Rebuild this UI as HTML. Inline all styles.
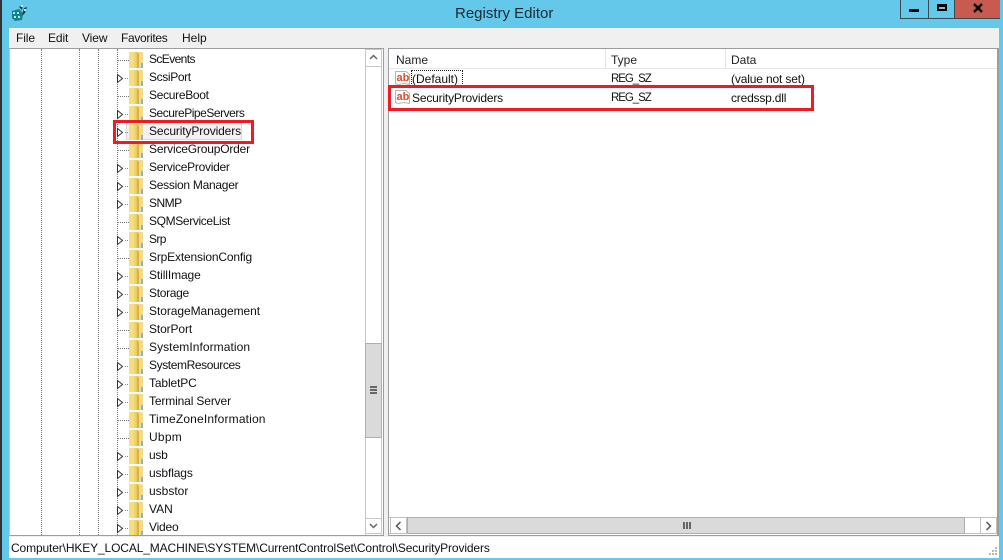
<!DOCTYPE html>
<html>
<head>
<meta charset="utf-8">
<style>
html,body{margin:0;padding:0;width:1003px;height:560px;overflow:hidden;background:#63c8ea}
body{position:relative;font-family:"Liberation Sans",sans-serif;font-size:12px;color:#111}
div,span,svg{position:absolute}
.t{white-space:nowrap;line-height:18px;height:18px}
.m{top:29px;line-height:18px;color:#111}
.r{left:0;width:360px;height:18px}
.r .t{left:139px;top:0}
.r svg{left:0;top:0;overflow:visible}
.h{top:51px;line-height:18px;color:#222;white-space:nowrap}
.sep{top:49px;width:1px;height:19px;background:#e3e3e3}
.red{border:3px solid #ed1c24;box-sizing:border-box}
.sz{font-size:11.500px;letter-spacing:-1.050px}
</style>
</head>
<body>
<svg width="0" height="0" style="left:0;top:0">
<defs>
<linearGradient id="f" x1="0" x2="1" y1="0" y2="0"><stop offset="0" stop-color="#f4dc8a"/><stop offset=".5" stop-color="#f6de80"/><stop offset="1" stop-color="#e9c75f"/></linearGradient>
<g id="folder">
<path d="M119 2H133V18H119Z" fill="#f3dc88"/>
<path d="M119 2H127V18H119Z" fill="url(#f)"/>
<path d="M127 2L129 4V18H127Z" fill="#d9b24a"/>
<path d="M131 13H133V18H131Z" fill="#7fb6d6"/>
</g>
<g id="arrow"><path d="M107.500 6.500L112.500 10.500L107.500 14.500Z" fill="#fff" stroke="#333" stroke-width="1"/><path d="M115 10.500H118" stroke="#888" stroke-dasharray="1 1"/></g>
<path id="dash" d="M108 10.500H119" stroke="#777" stroke-dasharray="1 1"/>
</defs>
</svg>

<!-- window -->
<div style="left:0;top:0;width:2px;height:560px;background:#333"></div>
<svg style="left:10px;top:4px" width="18" height="18" viewBox="0 0 18 18">
<path d="M2 7L9 5L13 9L12 16L5 17L2 14Z" fill="#17828c"/>
<path d="M3 8h2v2H3zM7 8h2v2H7zM4 12h2v2H4zM8 12h2v2H8z" fill="#9cf0ee"/>
<path d="M9 3L13 1L12 6ZM14 4L17 3L15 9L12 12Z" fill="#0f3a44"/>
<path d="M11 1h2v2h-2zM14 5h2v2h-2z" fill="#a8f4f0"/>
</svg>
<div class="t" style="left:455px;top:5px;font-size:15px;color:#1d2a33;line-height:18px">Registry Editor</div>

<!-- caption buttons -->
<div style="left:900px;top:0;width:54px;height:18px;border:1px solid #3b4a50;border-top:0;border-right:0"></div>
<div style="left:928px;top:0;width:1px;height:18px;background:#3b4a50"></div>
<div style="left:954px;top:0;width:46px;height:19px;background:#c75b50;border-bottom:1px solid #3b4a50;border-left:1px solid #3b4a50;box-sizing:border-box"></div>
<div style="left:909px;top:9px;width:10px;height:3px;background:#000"></div>
<div style="left:937px;top:4px;width:6px;height:2px;border:2px solid #000;border-top-width:3px"></div>
<svg style="left:972px;top:3px" width="12" height="10" viewBox="0 0 12 10"><path d="M2 1L10 9M10 1L2 9" stroke="#000" stroke-width="2.400"/></svg>

<!-- client -->
<div style="left:9px;top:28px;width:990px;height:530px;background:#f0f0f0"></div>
<div class="m" style="left:16px;letter-spacing:-.1px">File</div>
<div class="m" style="left:48px;letter-spacing:-.1px">Edit</div>
<div class="m" style="left:82px;letter-spacing:-.1px">View</div>
<div class="m" style="left:121px;letter-spacing:-.33px">Favorites</div>
<div class="m" style="left:182px">Help</div>

<!-- tree pane -->
<div style="left:9px;top:48px;width:375px;height:488px;background:#fff;border-top:1px solid #9a9ea3;border-left:1px solid #c4c8cc;border-right:1px solid #9a9ea3;border-bottom:1px solid #9a9ea3;box-sizing:border-box"></div>
<div style="left:41px;top:49px;width:0;height:486px;border-left:1px dotted #777"></div>
<div style="left:79px;top:49px;width:0;height:486px;border-left:1px dotted #777"></div>
<div style="left:98px;top:49px;width:0;height:486px;border-left:1px dotted #777"></div>
<div style="left:117px;top:49px;width:0;height:486px;border-left:1px dotted #777"></div>

<div style="left:10px;top:49px;width:355px;height:486px;overflow:hidden">
<div style="left:116px;top:73px;width:116px;height:18px;background:#f2f2f2;border:1px solid #dadada;box-sizing:border-box"></div>
<div class="r" style="top:1px"><svg width="10" height="18"><use href="#dash"/><use href="#folder"/></svg><div class="t" style="letter-spacing:-.6px">ScEvents</div></div>
<div class="r" style="top:19px"><svg width="10" height="18"><use href="#arrow"/><use href="#folder"/></svg><div class="t" style="letter-spacing:-.37px">ScsiPort</div></div>
<div class="r" style="top:37px"><svg width="10" height="18"><use href="#dash"/><use href="#folder"/></svg><div class="t" style="letter-spacing:-.3px">SecureBoot</div></div>
<div class="r" style="top:55px"><svg width="10" height="18"><use href="#arrow"/><use href="#folder"/></svg><div class="t" style="letter-spacing:-.47px">SecurePipeServers</div></div>
<div class="r" style="top:73px"><svg width="10" height="18"><use href="#arrow"/><use href="#folder"/></svg><div class="t" style="letter-spacing:-.12px">SecurityProviders</div></div>
<div class="r" style="top:91px"><svg width="10" height="18"><use href="#dash"/><use href="#folder"/></svg><div class="t" style="letter-spacing:-.18px">ServiceGroupOrder</div></div>
<div class="r" style="top:109px"><svg width="10" height="18"><use href="#arrow"/><use href="#folder"/></svg><div class="t" style="letter-spacing:-.27px">ServiceProvider</div></div>
<div class="r" style="top:127px"><svg width="10" height="18"><use href="#arrow"/><use href="#folder"/></svg><div class="t" style="letter-spacing:-.27px">Session Manager</div></div>
<div class="r" style="top:145px"><svg width="10" height="18"><use href="#arrow"/><use href="#folder"/></svg><div class="t" style="letter-spacing:-.5px">SNMP</div></div>
<div class="r" style="top:163px"><svg width="10" height="18"><use href="#dash"/><use href="#folder"/></svg><div class="t" style="letter-spacing:-.36px">SQMServiceList</div></div>
<div class="r" style="top:181px"><svg width="10" height="18"><use href="#arrow"/><use href="#folder"/></svg><div class="t" style="letter-spacing:-.6px">Srp</div></div>
<div class="r" style="top:199px"><svg width="10" height="18"><use href="#dash"/><use href="#folder"/></svg><div class="t" style="letter-spacing:-.17px">SrpExtensionConfig</div></div>
<div class="r" style="top:217px"><svg width="10" height="18"><use href="#arrow"/><use href="#folder"/></svg><div class="t" style="letter-spacing:-.1px">StillImage</div></div>
<div class="r" style="top:235px"><svg width="10" height="18"><use href="#arrow"/><use href="#folder"/></svg><div class="t" style="letter-spacing:-.3px">Storage</div></div>
<div class="r" style="top:253px"><svg width="10" height="18"><use href="#arrow"/><use href="#folder"/></svg><div class="t" style="letter-spacing:-.06px">StorageManagement</div></div>
<div class="r" style="top:271px"><svg width="10" height="18"><use href="#dash"/><use href="#folder"/></svg><div class="t" style="letter-spacing:-.12px">StorPort</div></div>
<div class="r" style="top:289px"><svg width="10" height="18"><use href="#dash"/><use href="#folder"/></svg><div class="t" style="letter-spacing:.06px">SystemInformation</div></div>
<div class="r" style="top:307px"><svg width="10" height="18"><use href="#arrow"/><use href="#folder"/></svg><div class="t" style="letter-spacing:-.4px">SystemResources</div></div>
<div class="r" style="top:325px"><svg width="10" height="18"><use href="#arrow"/><use href="#folder"/></svg><div class="t" style="letter-spacing:-.12px">TabletPC</div></div>
<div class="r" style="top:343px"><svg width="10" height="18"><use href="#arrow"/><use href="#folder"/></svg><div class="t" style="letter-spacing:-.14px">Terminal Server</div></div>
<div class="r" style="top:361px"><svg width="10" height="18"><use href="#dash"/><use href="#folder"/></svg><div class="t" style="letter-spacing:.16px">TimeZoneInformation</div></div>
<div class="r" style="top:379px"><svg width="10" height="18"><use href="#dash"/><use href="#folder"/></svg><div class="t" style="letter-spacing:.25px">Ubpm</div></div>
<div class="r" style="top:397px"><svg width="10" height="18"><use href="#arrow"/><use href="#folder"/></svg><div class="t" style="letter-spacing:-.3px">usb</div></div>
<div class="r" style="top:415px"><svg width="10" height="18"><use href="#arrow"/><use href="#folder"/></svg><div class="t" style="letter-spacing:-.12px">usbflags</div></div>
<div class="r" style="top:433px"><svg width="10" height="18"><use href="#arrow"/><use href="#folder"/></svg><div class="t">usbstor</div></div>
<div class="r" style="top:451px"><svg width="10" height="18"><use href="#arrow"/><use href="#folder"/></svg><div class="t">VAN</div></div>
<div class="r" style="top:469px"><svg width="10" height="18"><use href="#arrow"/><use href="#folder"/></svg><div class="t" style="letter-spacing:-.2px">Video</div></div>
</div>

<!-- tree scrollbar -->
<div style="left:365px;top:49px;width:17px;height:486px;background:#fff;border-left:1px solid #c8c8c8;border-right:1px solid #c8c8c8;box-sizing:border-box"></div>
<div style="left:365px;top:49px;width:17px;height:18px;border:1px solid #c8c8c8;box-sizing:border-box;background:#fff"></div>
<svg style="left:369px;top:54px" width="9" height="6"><path d="M1 5L4.500 1.500L8 5" fill="none" stroke="#666" stroke-width="1.500"/></svg>
<div style="left:365px;top:343px;width:17px;height:95px;background:#dadada;border:1px solid #aeaeae;box-sizing:border-box"></div>
<div style="left:370px;top:386px;width:7px;height:2px;background:#666"></div>
<div style="left:370px;top:389px;width:7px;height:2px;background:#666"></div>
<div style="left:370px;top:392px;width:7px;height:2px;background:#666"></div>
<div style="left:365px;top:518px;width:17px;height:16px;border:1px solid #c8c8c8;box-sizing:border-box;background:#fff"></div>
<svg style="left:369px;top:523px" width="9" height="6"><path d="M1 1L4.500 4.500L8 1" fill="none" stroke="#666" stroke-width="1.500"/></svg>

<!-- list pane -->
<div style="left:388px;top:48px;width:611px;height:488px;background:#fff;border:1px solid #9a9ea3;border-right:2px solid #9a9ea3;box-sizing:border-box"></div>
<div class="h" style="left:396px">Name</div>
<div class="h" style="left:611px">Type</div>
<div class="h" style="left:731px">Data</div>
<div class="sep" style="left:605px"></div>
<div class="sep" style="left:725px"></div>
<div style="left:389px;top:68px;width:608px;height:1px;background:#e8e8e8"></div>

<svg style="left:394px;top:70px" width="18" height="17" viewBox="0 0 18 17"><path d="M1.500 1.500H12L15.500 4.500V14.500L10 13.500L4 14.500L1.500 13.500Z" fill="#fff" stroke="#b5b5b5"/><text x="2.500" y="11" font-family="Liberation Sans" font-size="11" font-weight="bold" fill="#d4502a">ab</text></svg>
<div class="t" style="left:412px;top:70px">(Default)</div>
<div style="left:411px;top:70px;width:52px;height:16px;border:1px dotted #222;box-sizing:border-box"></div>
<div class="t sz" style="left:611px;top:70px">REG_SZ</div>
<div class="t" style="left:731px;top:70px;letter-spacing:-.15px">(value not set)</div>

<svg style="left:394px;top:89px" width="18" height="17" viewBox="0 0 18 17"><path d="M1.500 1.500H12L15.500 4.500V14.500L10 13.500L4 14.500L1.500 13.500Z" fill="#fff" stroke="#b5b5b5"/><text x="2.500" y="11" font-family="Liberation Sans" font-size="11" font-weight="bold" fill="#d4502a">ab</text></svg>
<div class="t" style="left:412px;top:89px;letter-spacing:-.18px">SecurityProviders</div>
<div class="t sz" style="left:611px;top:89px">REG_SZ</div>
<div class="t" style="left:731px;top:89px;letter-spacing:-.2px">credssp.dll</div>

<!-- red highlight boxes -->
<div class="red" style="left:113px;top:120px;width:141px;height:24px"></div>
<div class="red" style="left:388px;top:85px;width:426px;height:26px"></div>

<!-- list hscroll -->
<div style="left:389px;top:517px;width:608px;height:17px;background:#fff;border-top:1px solid #c0c0c0;border-bottom:1px solid #c0c0c0;box-sizing:border-box"></div>
<div style="left:390px;top:517px;width:17px;height:17px;border:1px solid #c0c0c0;box-sizing:border-box;background:#fff"></div>
<svg style="left:395px;top:521px" width="7" height="10"><path d="M5.500 1L1.500 5L5.500 9" fill="none" stroke="#555" stroke-width="1.500"/></svg>
<div style="left:407px;top:517px;width:558px;height:17px;background:#dadada;border:1px solid #aeaeae;box-sizing:border-box"></div>
<div style="left:683px;top:522px;width:2px;height:7px;background:#666"></div>
<div style="left:686px;top:522px;width:2px;height:7px;background:#666"></div>
<div style="left:689px;top:522px;width:2px;height:7px;background:#666"></div>
<div style="left:980px;top:517px;width:17px;height:17px;border:1px solid #c0c0c0;box-sizing:border-box;background:#fff"></div>
<svg style="left:985px;top:521px" width="7" height="10"><path d="M1.500 1L5.500 5L1.500 9" fill="none" stroke="#555" stroke-width="1.500"/></svg>

<!-- status bar -->
<div style="left:9px;top:537px;width:990px;height:21px;background:#fff"></div>
<div class="t" style="left:11px;top:539px;color:#111;letter-spacing:-.13px">Computer\HKEY_LOCAL_MACHINE\SYSTEM\CurrentControlSet\Control\SecurityProviders</div>
<svg style="left:987px;top:546px" width="11" height="11"><path d="M8 1h2v2H8zM8 4h2v2H8zM5 4h2v2H5zM8 7h2v2H8zM5 7h2v2H5zM2 7h2v2H2z" fill="#b8b8b8"/></svg>
</body>
</html>
